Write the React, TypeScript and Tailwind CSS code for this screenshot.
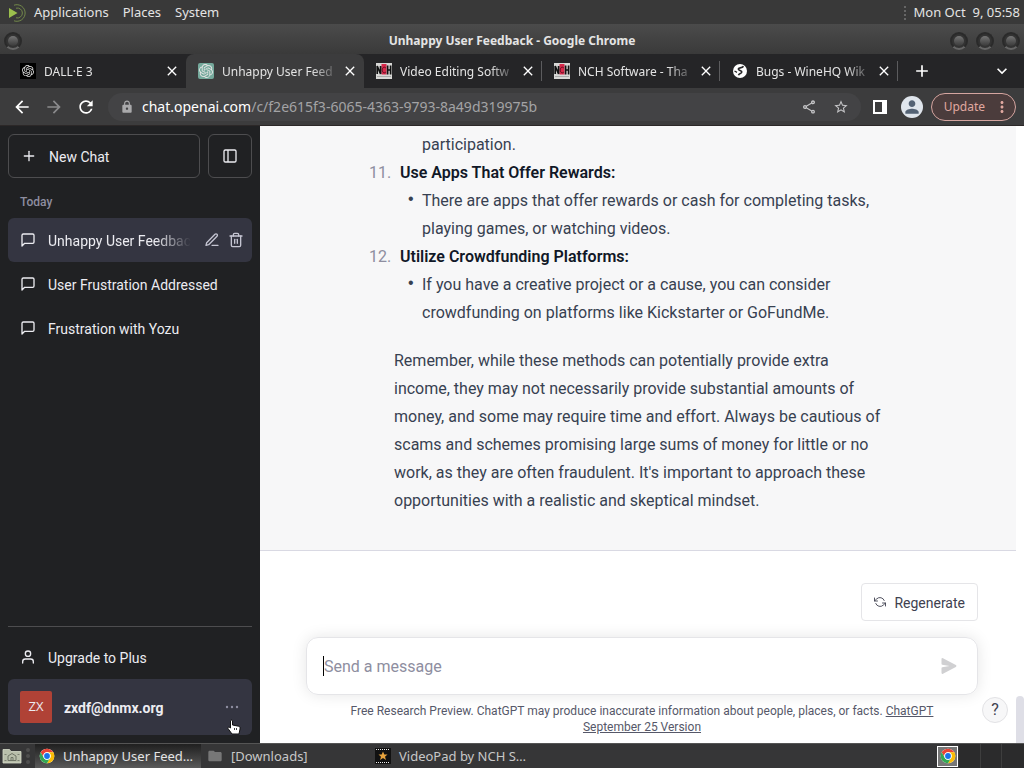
import { ReactNode } from "react";
import { SiOpenai } from "react-icons/si";
import {
  MdArrowBack, MdArrowForward, MdRefresh, MdLock, MdOutlineShare, MdStarBorder,
  MdPerson, MdMoreVert, MdAdd, MdClose, MdKeyboardArrowDown, MdFolder,
} from "react-icons/md";
import { FiPlus, FiMessageSquare, FiEdit3, FiTrash2, FiUser } from "react-icons/fi";

function MenuLogo() {
  return (
    <svg viewBox="0 0 20 20" className="size-5" aria-hidden="true">
      <path d="M1 5 L9.500 10 L1 15 Z" fill="#9bbf4d" />
      <path d="M6 2.200 A8.300 8.300 0 1 1 6 17.800" fill="none" stroke="#72884a" strokeWidth="1" />
      <path d="M8 5.200 A5 5 0 1 1 8 14.800" fill="none" stroke="#72884a" strokeWidth="1" />
    </svg>
  );
}

function ChromeLogo({ className }: { className: string }) {
  return (
    <svg viewBox="0 0 48 48" className={className} aria-hidden="true">
      <circle cx="24" cy="24" r="22" fill="#fff" />
      <path d="M24 13 H43.050 A22 22 0 0 0 4.950 13 L14.470 29.500 A11 11 0 0 1 24 13 Z" fill="#ea4335" />
      <path d="M33.530 29.500 L24 46 A22 22 0 0 0 43.050 13 H24 A11 11 0 0 1 33.530 29.500 Z" fill="#fbbc05" />
      <path d="M14.470 29.500 L4.950 13 A22 22 0 0 0 24 46 L33.530 29.500 A11 11 0 0 1 14.470 29.500 Z" fill="#34a853" />
      <circle cx="24" cy="24" r="11" fill="#fff" />
      <circle cx="24" cy="24" r="8.700" fill="#1a73e8" />
    </svg>
  );
}

function NchIcon() {
  return (
    <svg viewBox="0 0 16 16" className="size-4 shrink-0" aria-hidden="true">
      <rect width="16" height="16" fill="#d8d8d6" />
      <rect x="5.500" y="1" width="5" height="10.500" fill="#d8284a" />
      <path d="M1.200 11 V3 L4.600 11 V3 M11.600 2.500 V11.500 M14.600 2.500 V11.500 M11.600 7 H14.600" fill="none" stroke="#111" strokeWidth="1.700" />
      <path d="M9.800 5 C8 3 6.200 5 6.200 7 S8 11 9.800 9" fill="none" stroke="#5a0f20" strokeWidth="1" />
      <rect x="1" y="13" width="14" height="1" fill="#aaa" />
    </svg>
  );
}

function GlobeIcon() {
  return (
    <svg viewBox="0 0 16 16" className="size-4 shrink-0" aria-hidden="true">
      <circle cx="8" cy="8" r="7" fill="#fff" />
      <path d="M11.500 3.300 C10 5.600 6.300 4.200 6.300 6 C6.300 7.800 10 7 9.800 9 C9.600 10.800 7 10.300 6.500 12.200" fill="none" stroke="#252527" strokeWidth="1.600" />
      <path d="M2.500 8 L5 9.300" stroke="#252527" strokeWidth="1.300" />
    </svg>
  );
}

function FilesIcon() {
  return (
    <svg viewBox="0 0 20 20" className="size-5" aria-hidden="true">
      <path d="M1 3.500 h6.500 l1.500 2 H19 V17 H1 Z" fill="#b9bfab" stroke="#d6dac9" strokeWidth="0.800" />
      <path d="M6 14.500 V10 L10 7.500 L14 10 V14.500 Z M9 14.500 V11.500 h2 V14.500" fill="none" stroke="#6f7466" strokeWidth="1" />
      <path d="M2.500 8.500 h2 M2.500 14.500 h2 M15.500 8.500 h2 M15.500 14.500 h2" stroke="#7c8172" strokeWidth="1" />
    </svg>
  );
}

function RoundButton({ label }: { label: string }) {
  return (
    <button aria-label={label} className="flex size-[18px] items-center justify-center rounded-full border-2 border-[#2a2a2a] border-b-[#666] bg-[#333]">
      <span className="size-2.5 rounded-full bg-linear-to-b from-[#757575] to-[#3a3a3a]" />
    </button>
  );
}

function Tab({ icon, title, active = false, divider = false }: { icon: ReactNode; title: string; active?: boolean; divider?: boolean }) {
  return (
    <div className={active ? "flex h-full items-center rounded-t-lg bg-[#3c3c3d] pr-1.5 pl-3" : "flex h-full items-center pr-1.5 pl-3"}>
      {icon}
      <span className="ml-2 w-[120px] pt-px text-[12px] whitespace-nowrap mask-r-from-75% mask-r-to-98%">{title}</span>
      <button aria-label={"Close " + title} className="text-white"><MdClose className="size-4" /></button>
      {divider && <span className="-mr-1.5 ml-[5px] h-5 w-px bg-[#5c5c5e]" />}
    </div>
  );
}

function ChatLink({ title }: { title: string }) {
  return (
    <a href="#" className="flex h-11 items-center gap-3 rounded-md px-3">
      <FiMessageSquare className="size-4 shrink-0" />
      <span className="pt-0.5">{title}</span>
    </a>
  );
}

function RegenerateIcon() {
  return (
    <svg viewBox="0 0 24 24" className="size-3" fill="none" stroke="currentColor" strokeWidth="1.800" strokeLinecap="round" strokeLinejoin="round" aria-hidden="true">
      <path d="M1 4v6h6" />
      <path d="M23 20v-6h-6" />
      <path d="M20.490 9A9 9 0 0 0 5.640 5.640L1 10m22 4l-4.640 4.360A9 9 0 0 1 3.510 15" />
    </svg>
  );
}

function Cursor() {
  return (
    <svg viewBox="0 0 16 16" className="absolute top-10 left-[218px] size-4" aria-hidden="true">
      <path d="M4.500 2 C4.500 .700 6.500 .700 6.500 2 V6 L12.500 7.200 C14 7.600 14.300 8.500 14 10 L13 15 H6 L2 9.500 C1.500 8.500 2.500 7.500 4.500 9 Z" fill="#fff" stroke="#111" strokeWidth="1" />
      <path d="M8.500 9 v2 M10.500 9 v2" stroke="#111" strokeWidth="0.800" />
    </svg>
  );
}

function Item({ n, title, children }: { n: string; title: string; children: ReactNode }) {
  return (
    <li>
      <div className="flex">
        <span className="-ml-[25px] w-[31px] text-[#8e8ea0]">{n}</span>
        <strong className="font-semibold text-[#111827]">{title}</strong>
      </div>
      <ul>
        <li className="flex">
          <span className="w-7 shrink-0 pl-3.5 font-['Liberation_Sans',sans-serif] leading-6">•</span>
          <span>{children}</span>
        </li>
      </ul>
    </li>
  );
}

export default function App() {
  return (
    <div className="flex h-screen min-h-[640px] flex-col overflow-hidden bg-[#3a3a3b] font-['Noto_Sans',sans-serif] text-[13px] text-[#e4e4e4]">
      <header className="flex h-6 shrink-0 items-center justify-between bg-[#393939] px-2 pt-0.5">
        <nav className="flex items-center gap-3.5">
          <div className="flex items-center gap-1.5">
            <MenuLogo />
            <button>Applications</button>
          </div>
          <button>Places</button>
          <button>System</button>
        </nav>
        <div className="flex items-center gap-2">
          <span className="h-3.5 border-l-2 border-dotted border-[#666]" />
          <span className="-mr-1 whitespace-pre">Mon Oct  9, 05:58</span>
        </div>
      </header>

      <div className="flex h-[30px] shrink-0 items-center bg-linear-to-b from-[#4b4b4b] to-[#3a3a3a] px-1 pt-1">
        <div className="flex flex-1"><RoundButton label="Window menu" /></div>
        <h1 className="text-[12px] font-bold">Unhappy User Feedback - Google Chrome</h1>
        <div className="flex flex-1 justify-end gap-2">
          <RoundButton label="Minimize" />
          <RoundButton label="Maximize" />
          <RoundButton label="Close window" />
        </div>
      </div>

      <div className="flex h-[34px] shrink-0 items-center bg-[#252527] pr-3 pl-2">
        <Tab icon={<span className="flex size-4 shrink-0 items-center justify-center bg-black"><SiOpenai className="size-3" /></span>} title="DALL·E 3" />
        <Tab active icon={<span className="flex size-4 shrink-0 items-center justify-center rounded-xs bg-[#75a99c]"><SiOpenai className="size-3.5" /></span>} title="Unhappy User Feed" />
        <Tab divider icon={<NchIcon />} title="Video Editing Softw" />
        <Tab divider icon={<NchIcon />} title="NCH Software - Tha" />
        <Tab divider icon={<GlobeIcon />} title="Bugs - WineHQ Wik" />
        <button aria-label="New tab" className="ml-3.5 text-white"><MdAdd className="size-5" /></button>
        <button aria-label="Search tabs" className="ml-auto text-white"><MdKeyboardArrowDown className="size-5" /></button>
      </div>

      <div className="flex h-[38px] shrink-0 items-center border-b border-[#2c2828] bg-[#3c3c3d] px-2">
        <div className="flex items-center gap-3 pl-1">
          <button aria-label="Back" className="text-white"><MdArrowBack className="size-5" /></button>
          <button aria-label="Forward" className="text-[#8a8a8c]"><MdArrowForward className="size-5" /></button>
          <button aria-label="Reload" className="text-white"><MdRefresh className="size-5" /></button>
        </div>
        <div className="ml-3 flex h-7 flex-1 items-center rounded-full bg-[#434345] px-3 text-[14px]">
          <MdLock className="size-3.5 text-[#a9a9ab]" />
          <span className="ml-2 flex-1 text-white">chat.openai.com<span className="text-[#a3a3a5]">/c/f2e615f3-6065-4363-9793-8a49d319975b</span></span>
          <button aria-label="Share" className="text-[#c4c4c6]"><MdOutlineShare className="size-4" /></button>
          <button aria-label="Bookmark" className="ml-4 text-[#c4c4c6]"><MdStarBorder className="size-4" /></button>
        </div>
        <button aria-label="Side panel" className="ml-3 flex h-3.5 w-3.5 border-2 border-r-[5px] border-white" />
        <button aria-label="Profile" className="ml-3.5 flex size-[22px] items-center justify-center rounded-full bg-[#dfe5ec] text-[#536274]"><MdPerson className="size-5" /></button>
        <button className="ml-2 flex h-7 items-center rounded-full border border-[#d5a5a0] bg-[#4b3c3c] pr-1 pl-3 text-[12px] text-[#e0a8a0]">
          Update
          <MdMoreVert className="ml-2 size-[18px]" />
        </button>
      </div>

      <div className="flex min-h-0 flex-1 font-[Roboto,sans-serif] text-[14px]">
        <aside className="flex w-[260px] shrink-0 flex-col bg-[#202123] p-2 text-[#ececf1]">
          <div className="flex gap-2">
            <button className="flex h-11 flex-1 items-center gap-3 rounded-md border border-[#4d4d4f] px-3">
              <FiPlus className="size-4" />
              <span className="pt-0.5">New Chat</span>
            </button>
            <button aria-label="Hide sidebar" className="flex size-11 items-center justify-center rounded-md border border-[#4d4d4f]">
              <svg viewBox="0 0 24 24" className="size-4" fill="none" stroke="currentColor" strokeWidth="2"><rect x="3" y="3" width="18" height="18" rx="2" /><path d="M9 3v18" /></svg>
            </button>
          </div>
          <h2 className="px-3 pt-4 pb-2 text-[12px] leading-4 font-medium text-[#8e8ea0]">Today</h2>
          <div className="flex h-11 items-center rounded-md bg-[#343541] pr-2 pl-3">
            <a href="#" className="flex min-w-0 flex-1 items-center gap-3">
              <FiMessageSquare className="size-4 shrink-0" />
              <span className="pt-0.5 whitespace-nowrap mask-r-from-75% mask-r-to-100%">Unhappy User Feedbac</span>
            </a>
            <button aria-label="Rename" className="ml-2 text-[#c5c5d2]"><FiEdit3 className="size-4" /></button>
            <button aria-label="Delete" className="ml-2 text-[#c5c5d2]"><FiTrash2 className="size-4" /></button>
          </div>
          <ChatLink title="User Frustration Addressed" />
          <ChatLink title="Frustration with Yozu" />
          <div className="mt-auto border-t border-[#4d4d4f] pt-2">
            <a href="#" className="flex h-11 items-center gap-3 px-3">
              <FiUser className="size-4" />
              <span className="pt-0.5">Upgrade to Plus</span>
            </a>
            <div className="relative">
              <button className="flex h-14 w-full items-center rounded-md bg-[#343541] px-3 font-bold">
                <span className="flex size-8 items-center justify-center rounded-xs bg-[#b04236] font-['Open_Sans',sans-serif] text-[13px] font-normal">ZX</span>
                <span className="ml-3 pt-0.5">zxdf@dnmx.org</span>
                <svg viewBox="0 0 16 16" className="ml-auto size-4 fill-[#8e8ea0]" aria-hidden="true"><circle cx="3" cy="8" r="1.200" /><circle cx="8" cy="8" r="1.200" /><circle cx="13" cy="8" r="1.200" /></svg>
              </button>
              <Cursor />
            </div>
          </div>
        </aside>

        <main className="flex min-w-0 flex-1 flex-col bg-white">
          <section className="flex min-h-0 flex-1 flex-col justify-end overflow-hidden">
            <div className="mr-2 flex shrink-0 grow flex-col justify-end border-b border-[#d9d9e3] bg-[#f7f7f8] pb-[35px] text-[16px] leading-7 text-[#374151]">
              <div className="mx-auto w-[488px]">
                <ol>
                  <li className="pl-7">participation.</li>
                  <Item n="11." title="Use Apps That Offer Rewards:">
                    There are apps that offer rewards or cash for completing tasks,<br />playing games, or watching videos.
                  </Item>
                  <Item n="12." title="Utilize Crowdfunding Platforms:">
                    If you have a creative project or a cause, you can consider<br />crowdfunding on platforms like Kickstarter or GoFundMe.
                  </Item>
                </ol>
                <p className="mt-5">
                  Remember, while these methods can potentially provide extra<br />income, they may not necessarily provide substantial amounts of<br />money, and some may require time and effort. Always be cautious of<br />scams and schemes promising large sums of money for little or no<br />work, as they are often fraudulent. It's important to approach these<br />opportunities with a realistic and skeptical mindset.
                </p>
              </div>
            </div>
          </section>
          <footer className="relative shrink-0 pt-8 pr-[46px] pb-2 pl-[46px]">
            <div className="flex justify-end">
              <button className="flex h-[38px] items-center gap-2 rounded-sm border border-[#e5e5e8] px-3 text-[#40414f]">
                <RegenerateIcon />
                <span className="pt-0.5">Regenerate</span>
              </button>
            </div>
            <form className="mt-4 flex h-[58px] items-center rounded-xl border border-[#e5e5e8] px-4 shadow-[0_0_15px_rgba(0,0,0,0.1)]">
              <span className="h-5 w-px bg-black" />
              <input aria-label="Message" placeholder="Send a message" className="min-w-0 flex-1 pt-0.5 text-[16px] text-black outline-none placeholder:text-[#8e8ea0]" />
              <button type="button" aria-label="Send" className="pr-1 text-[#d0d0d2]">
                <svg viewBox="0 0 16 16" className="size-4" fill="currentColor"><path d="M.5 1.163A1 1 0 0 1 1.970.280l12.868 6.837a1 1 0 0 1 0 1.766L1.969 15.720A1 1 0 0 1 .5 14.836V10.330a1 1 0 0 1 .816-.983L8.500 8 1.316 6.653A1 1 0 0 1 .5 5.670V1.163Z" /></svg>
              </button>
            </form>
            <p className="mt-2 text-center text-[12px] leading-4 text-[#565869]">
              Free Research Preview. ChatGPT may produce inaccurate information about people, places, or facts. <a href="#" className="underline">ChatGPT<br />September 25 Version</a>
            </p>
            <button aria-label="Help" className="absolute right-4 bottom-5 flex size-[26px] items-center justify-center rounded-full border border-[#e2e2e5] bg-[#f7f7f8] text-[16px] text-[#40414f]">?</button>
            <span className="absolute right-0 bottom-0 h-[47px] w-2 rounded-t bg-[#dedee6]" />
          </footer>
        </main>
      </div>

      <footer className="flex h-[25px] shrink-0 items-center border-t border-[#555] bg-[#363637]">
        <button aria-label="Show files" className="ml-0.5"><FilesIcon /></button>
        <span className="mr-[5px] ml-1 h-4 border-l-4 border-dotted border-[#4e4e4e]" />
        <button className="flex h-full w-[166px] items-center gap-2 bg-linear-to-b from-[#202020] to-[#5a5a5a] px-1">
          <ChromeLogo className="size-4" />
          <span className="pt-0.5">Unhappy User Feed…</span>
        </button>
        <button className="flex h-full w-[168px] items-center gap-2 px-1.5 text-[#c8c8c8]">
          <MdFolder className="size-4 text-[#777]" />
          <span className="pt-0.5">[Downloads]</span>
        </button>
        <button className="flex h-full items-center gap-2 px-1.5 text-[#c8c8c8]">
          <svg viewBox="0 0 16 16" className="size-4" aria-hidden="true"><rect width="16" height="16" fill="#111" /><path d="M1 1.500h14M1 14.500h14" stroke="#eee" strokeWidth="1" strokeDasharray="1 1" /><path d="M8 3.500l1.300 3H12.500L10 8.700l1 3.300-3-2-3 2 1-3.300L3.500 6.500h3.200z" fill="#e8a33d" /></svg>
          <span className="pt-0.5">VideoPad by NCH S…</span>
        </button>
        <div className="ml-auto flex h-full items-center">
          <div className="flex size-[21px] items-center justify-center border border-white bg-[#777]"><ChromeLogo className="size-4" /></div>
          <div className="ml-px grid h-full w-[65px] grid-cols-3 divide-x divide-[#3e3e3e] bg-[#2b2b2c]"><span /><span /><span /></div>
        </div>
      </footer>
    </div>
  );
}
